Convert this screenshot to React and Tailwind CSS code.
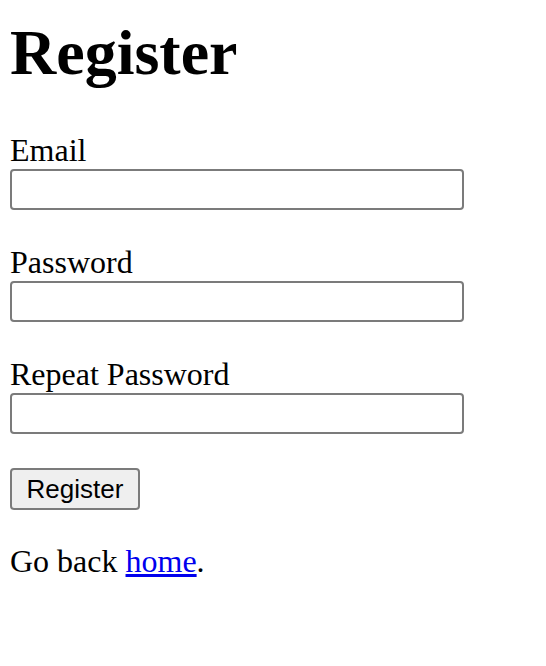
import { useState } from 'react';

const Field = ({ label, type, value, onChange }) => (
  <label className="block">
    <span className="block text-[32px] leading-[37px]">{label}</span>
    <input
      type={type}
      value={value}
      onChange={onChange}
      className="block w-[454px] h-[41px] border-2 border-[#7b7b7b] rounded-[4px] bg-white px-2 text-[20px] outline-none"
    />
  </label>
);

export default function App() {
  const [email, setEmail] = useState('');
  const [password, setPassword] = useState('');
  const [repeat, setRepeat] = useState('');

  return (
    <div className="min-h-[666px] bg-white text-black font-['Liberation_Serif',serif] pl-[10px] pt-[16px]">
      <h1 className="text-[64px] leading-[74px] font-bold">Register</h1>

      <form className="mt-[42px] flex flex-col gap-[34px]" onSubmit={(e) => e.preventDefault()}>
        <Field label="Email" type="email" value={email} onChange={(e) => setEmail(e.target.value)} />
        <Field label="Password" type="password" value={password} onChange={(e) => setPassword(e.target.value)} />
        <Field label="Repeat Password" type="password" value={repeat} onChange={(e) => setRepeat(e.target.value)} />
        <div>
          <button
            type="submit"
            className="w-[130px] h-[42px] border-2 border-[#7b7b7b] rounded-[4px] bg-[#efefef] font-['Liberation_Sans',Arial,sans-serif] text-[26px] leading-none text-black"
          >
            Register
          </button>
        </div>
      </form>

      <p className="mt-[33px] text-[32px] leading-[37px]">
        Go back <a href="#" className="text-[#0000ee] underline">home</a>.
      </p>
    </div>
  );
}
